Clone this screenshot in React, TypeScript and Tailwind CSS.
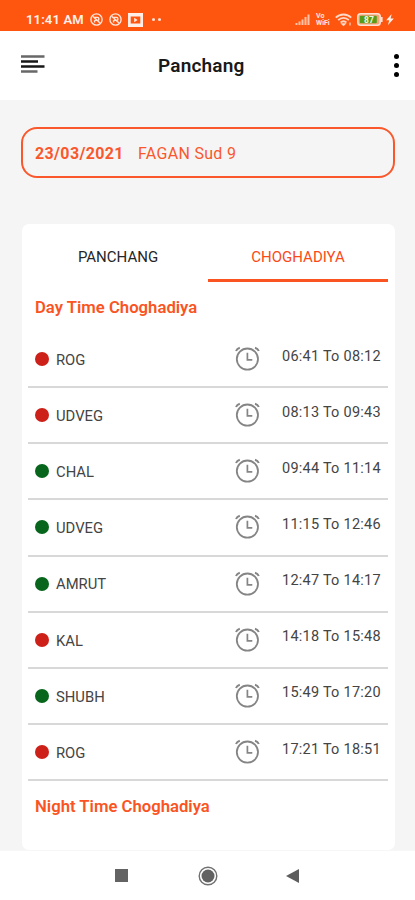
const days = [
  { name: "ROG", time: "06:41 To 08:12", good: false },
  { name: "UDVEG", time: "08:13 To 09:43", good: false },
  { name: "CHAL", time: "09:44 To 11:14", good: true },
  { name: "UDVEG", time: "11:15 To 12:46", good: true },
  { name: "AMRUT", time: "12:47 To 14:17", good: true },
  { name: "KAL", time: "14:18 To 15:48", good: false },
  { name: "SHUBH", time: "15:49 To 17:20", good: true },
  { name: "ROG", time: "17:21 To 18:51", good: false },
];

function AlarmClock() {
  return (
    <svg width="26" height="26" viewBox="0 0 26 26" fill="none" stroke="#858585">
      <circle cx="13.4" cy="13.1" r="10.6" strokeWidth="1.8" />
      <path d="M13.4 6.8v7h4.9" strokeWidth="1.7" />
      <path d="M2 5Q3 2.5 5.8 1.7M24.8 5Q23.8 2.5 21 1.7" strokeWidth="2" />
    </svg>
  );
}

function NoRing() {
  return (
    <svg width="13" height="13" viewBox="0 0 13 13" fill="none" stroke="#ffe6dc">
      <circle cx="6.5" cy="6.5" r="5.6" strokeWidth="1.4" />
      <path d="M4.2 4.4h3.2a1.5 1.5 0 0 1 0 3H4.6M3 3.4l7 6.6M4.6 7.2v2.4" strokeWidth="1.4" />
    </svg>
  );
}

function StatusBar() {
  return (
    <div className="flex h-[31px] shrink-0 items-center bg-[#ff560f] pt-[8px] text-[#fff0e9]">
      <span className="ml-[26px] w-[63px] whitespace-nowrap text-[13px] leading-none font-semibold tracking-[0.15px]">11:41 AM</span>
      <div className="ml-px flex items-center gap-[6px]">
        <NoRing />
        <NoRing />
        <svg width="15" height="14" viewBox="0 0 15 14">
          <path d="M0 0h15v14H0zM2.7 3.4v7.2h9.6V3.4z" fill="#ffeee7" fillRule="evenodd" />
          <path d="M6.2 4.8 9.6 7 6.2 9.2z" fill="#ffeee7" />
        </svg>
      </div>
      <div className="ml-[9px] flex gap-[3px]">
        <i className="size-[3px] rounded-full bg-[#ffe1d5]" />
        <i className="size-[3px] rounded-full bg-[#ffe1d5]" />
      </div>
      <svg className="ml-[134px]" width="15" height="11" viewBox="0 0 15 11" stroke="#ffc2a7" strokeWidth="2">
        <path d="M1.5 11V9M4.5 11V7.5M7.5 11V5.5M10.5 11V3M13.5 11V.5" />
      </svg>
      <div className="ml-[6px] flex w-[15px] flex-col text-[7px] font-bold text-[#ffe6dc]">
        <span className="h-[6px] leading-[6px]">Vo</span>
        <span className="mt-px h-[6px] leading-[6px]">WiFi</span>
      </div>
      <svg className="ml-[4px]" width="18" height="14" viewBox="0 0 18 14" fill="none" stroke="#ffd8c8" strokeWidth="1.8">
        <path d="M.8 4.7c4-4.3 11.4-4.3 15.4 0M3.2 7.2c3-3 7.6-3 10.6 0M5.6 9.5c1.8-1.6 4-1.6 5.8 0" />
        <path d="m6.8 10.8 1.7 1.7 1.7-1.7zM15 9.5v3" strokeWidth="1.2" />
      </svg>
      <svg className="ml-[4px]" width="26" height="13" viewBox="0 0 26 13">
        <rect x=".8" y=".8" width="22.4" height="11.4" rx="2.8" fill="#f7a579" stroke="#ffe2d3" strokeWidth="1.5" />
        <rect x="2.8" y="2.7" width="17" height="7.6" rx="1" fill="#579c19" />
        <path d="M24.7 4v5" stroke="#ffe2d3" strokeWidth="1.8" />
        <text x="12" y="9.6" textAnchor="middle" fill="#eff7df" fontSize="8.5" fontWeight="700" fontFamily="Roboto, sans-serif">87</text>
      </svg>
      <svg className="ml-[3px]" width="8" height="11" viewBox="0 0 8 11" fill="#fff0e8">
        <path d="M5.7 0 .2 6.2h3L2 11l5.8-6.4H4.6z" />
      </svg>
    </div>
  );
}

export default function App() {
  return (
    <main className="flex h-[900px] w-[415px] flex-col overflow-hidden bg-[#f5f5f5] font-['Roboto',sans-serif]">
      <StatusBar />
      <header className="flex h-[69px] shrink-0 items-center bg-white">
        <svg className="ml-[21px] -mt-[3px]" width="24" height="18" viewBox="0 0 24 18" fill="none" strokeWidth="2.5">
          <path d="M0 1.5h23.5M0 16.5h16.5" stroke="#686868" />
          <path d="M0 6.5h17M0 11.5h23.5" stroke="#171717" />
        </svg>
        <h1 className="ml-[113px] w-[90px] whitespace-nowrap text-[19px] leading-none font-semibold tracking-[0.18px] text-[#191919]">Panchang</h1>
        <div className="ml-[146px] flex flex-col gap-[4px] pb-px">
          <i className="size-[5px] rounded-full bg-black" />
          <i className="size-[5px] rounded-full bg-black" />
          <i className="size-[5px] rounded-full bg-black" />
        </div>
      </header>

      <section className="mt-[27px] mr-[20px] ml-[21px] flex h-[51px] shrink-0 items-center rounded-[16px] border-[2.5px] border-[#fa582c] px-[12px] pt-[2px] text-[16px] whitespace-nowrap text-[#fa582c]">
        <span className="w-[103px] font-bold tracking-[0.35px]">23/03/2021</span>
        <span className="tracking-[0.3px]">FAGAN Sud 9</span>
      </section>

      <section className="mt-[46px] mr-[20.5px] ml-[21.5px] h-[626px] shrink-0 rounded-[7px] bg-white px-[6.5px]">
        <nav className="flex h-[58px] text-[15px]">
          <div className="flex flex-1 items-center justify-center pt-[8px] text-[#262626]">PANCHANG</div>
          <div className="flex flex-1 items-center justify-center border-b-3 border-[#fa5423] pt-[11px] text-[#fa4a17]">CHOGHADIYA</div>
        </nav>
        <h2 className="flex h-[50px] items-center pt-px pl-[7px] text-[16.7px] font-semibold text-[#fa5423]">Day Time Choghadiya</h2>
        <ul>
          {days.map((row, i) => (
            <li key={i} className="flex h-[56.14px] items-center border-b-2 border-[#d8d8d8] text-[#444]">
              <i className={row.good ? "ml-[7px] size-[14px] rounded-full bg-[#08651c]" : "ml-[7px] size-[14px] rounded-full bg-[#cc2018]"} />
              <span className="ml-[7px] w-[178px] pt-[2px] text-[14.8px]">{row.name}</span>
              <AlarmClock />
              <time className="ml-[22px] pb-[5px] text-[14.5px] whitespace-nowrap tracking-[0.25px]">{row.time}</time>
            </li>
          ))}
        </ul>
        <h2 className="flex h-[50px] items-center pt-px pl-[7px] text-[16.7px] font-semibold text-[#fa5423]">Night Time Choghadiya</h2>
      </section>

      <footer className="flex h-[50px] shrink-0 items-center border-t border-[#f7f7f7] bg-white">
        <i className="ml-[115px] size-[13px] bg-[#636363]" />
        <svg className="ml-[70px]" width="20" height="20" viewBox="0 0 20 20">
          <circle cx="10" cy="10" r="8.8" fill="none" stroke="#707070" strokeWidth="1.4" />
          <circle cx="10" cy="10" r="6.5" fill="#626262" />
        </svg>
        <svg className="ml-[68px]" width="13" height="14" viewBox="0 0 13 14">
          <path d="M0 7 13 0v14z" fill="#5d5d5d" />
        </svg>
      </footer>
    </main>
  );
}
